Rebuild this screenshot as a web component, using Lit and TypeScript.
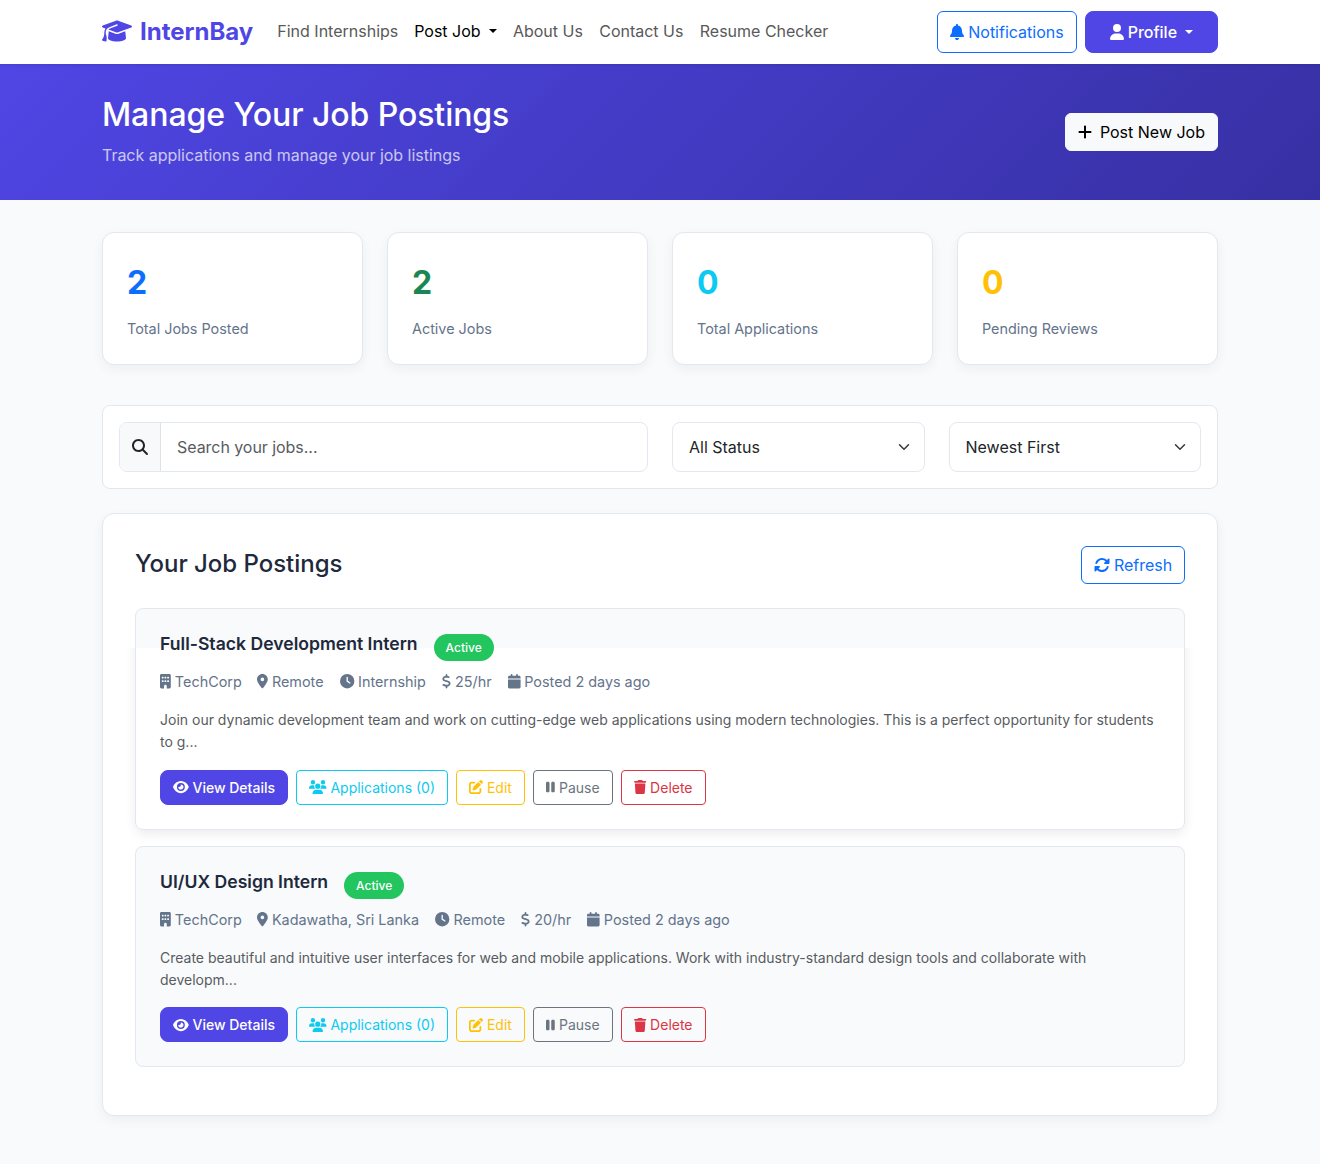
import { LitElement, html, css, svg } from "lit";
import { customElement, property } from "lit/decorators.js";
import { classMap } from "lit/directives/class-map.js";

const ICONS: Record<string, [number, string]> = {
  cap: [640, "M320 32c-8.1 0-16.1 1.4-23.7 4.1L15.8 137.4C6.3 140.9 0 149.9 0 160s6.3 19.1 15.8 22.6l57.9 20.9C57.3 229.3 48 259.8 48 291.9v28.1c0 28.4-10.8 57.7-22.3 80.8c-6.5 13-13.9 25.8-22.5 37.6C0 442.7-.9 448.3 .9 453.4s6 8.9 11.2 10.2l64 16c4.2 1.1 8.7 .3 12.4-2s6.3-6.1 7.1-10.4c8.6-42.8 4.3-81.2-2.1-108.7C90.3 344.3 86 329.8 80 316.5V291.9c0-30.2 10.2-58.7 27.9-81.5c12.9-15.5 29.6-28 49.2-35.7l157-61.7c8.2-3.2 17.5 .8 20.7 9s-.8 17.5-9 20.7l-157 61.7c-12.4 4.9-23.3 12.4-32.2 21.6l159.6 57.6c7.6 2.7 15.6 4.1 23.7 4.1s16.1-1.4 23.7-4.1L624.2 182.6c9.5-3.4 15.8-12.5 15.8-22.6s-6.3-19.1-15.8-22.6L343.7 36.1C336.1 33.4 328.1 32 320 32zM128 408c0 35.3 86 72 192 72s192-36.7 192-72L496.7 262.6 354.5 314c-11.1 4-22.8 6-34.5 6s-23.5-2-34.5-6L143.3 262.6 128 408z"],
  bell: [448, "M224 0c-17.7 0-32 14.3-32 32V51.2C119 66 64 130.6 64 208v18.8c0 47-17.3 92.4-48.5 127.6l-7.4 8.3c-8.4 9.4-10.4 22.9-5.3 34.4S19.4 416 32 416H416c12.6 0 24-7.4 29.2-18.9s3.1-25-5.3-34.4l-7.4-8.3C401.3 319.2 384 273.9 384 226.8V208c0-77.4-55-142-128-156.8V32c0-17.7-14.3-32-32-32zm45.3 493.3c12-12 18.7-28.3 18.7-45.3H224 160c0 17 6.7 33.3 18.7 45.3s28.3 18.7 45.3 18.7s33.3-6.7 45.3-18.7z"],
  user: [448, "M224 256A128 128 0 1 0 224 0a128 128 0 1 0 0 256zm-45.7 48C79.8 304 0 383.8 0 482.3C0 498.7 13.3 512 29.7 512H418.3c16.4 0 29.7-13.3 29.7-29.7C448 383.8 368.2 304 269.7 304H178.3z"],
  plus: [448, "M256 80c0-17.7-14.3-32-32-32s-32 14.3-32 32V224H48c-17.7 0-32 14.3-32 32s14.3 32 32 32H192V432c0 17.7 14.3 32 32 32s32-14.3 32-32V288H400c17.7 0 32-14.3 32-32s-14.3-32-32-32H256V80z"],
  search: [512, "M416 208c0 45.9-14.9 88.3-40 122.7L502.6 457.4c12.5 12.5 12.5 32.8 0 45.3s-32.8 12.5-45.3 0L330.7 376c-34.4 25.2-76.8 40-122.7 40C93.1 416 0 322.9 0 208S93.1 0 208 0S416 93.1 416 208zM208 352a144 144 0 1 0 0-288 144 144 0 1 0 0 288z"],
  sync: [512, "M142.9 142.9c62.2-62.2 162.7-62.5 225.3-1L327 183c-6.9 6.9-8.9 17.2-5.2 26.2s12.5 14.8 22.2 14.8H463.5c0 0 0 0 0 0H472c13.3 0 24-10.7 24-24V72c0-9.7-5.8-18.5-14.8-22.2s-19.3-1.7-26.2 5.2L413.4 96.6c-87.6-86.5-228.7-86.2-315.8 1C73.2 122 55.6 150.7 44.8 181.4c-5.9 16.7 2.9 34.9 19.5 40.8s34.9-2.9 40.8-19.5c7.7-21.8 20.2-42.3 37.8-59.8zM16 312v7.6 .7V440c0 9.7 5.8 18.5 14.8 22.2s19.3 1.7 26.2-5.2l41.6-41.6c87.6 86.5 228.7 86.2 315.8-1c24.4-24.4 42.1-53.1 52.9-83.7c5.9-16.7-2.9-34.9-19.5-40.8s-34.9 2.9-40.8 19.5c-7.7 21.8-20.2 42.3-37.8 59.8c-62.2 62.2-162.7 62.5-225.3 1L185 329c6.9-6.9 8.9-17.2 5.2-26.2s-12.5-14.8-22.2-14.8H48.4h-.7H40c-13.3 0-24 10.7-24 24z"],
  building: [384, "M48 0C21.5 0 0 21.5 0 48V464c0 26.5 21.5 48 48 48h96V432c0-26.5 21.5-48 48-48s48 21.5 48 48v80h96c26.5 0 48-21.5 48-48V48c0-26.5-21.5-48-48-48H48zM64 240c0-8.8 7.2-16 16-16h32c8.8 0 16 7.2 16 16v32c0 8.8-7.2 16-16 16H80c-8.8 0-16-7.2-16-16V240zm112-16h32c8.8 0 16 7.2 16 16v32c0 8.8-7.2 16-16 16H176c-8.8 0-16-7.2-16-16V240c0-8.8 7.2-16 16-16zm80 16c0-8.8 7.2-16 16-16h32c8.8 0 16 7.2 16 16v32c0 8.8-7.2 16-16 16H272c-8.8 0-16-7.2-16-16V240zM80 96h32c8.8 0 16 7.2 16 16v32c0 8.8-7.2 16-16 16H80c-8.8 0-16-7.2-16-16V112c0-8.8 7.2-16 16-16zm80 16c0-8.8 7.2-16 16-16h32c8.8 0 16 7.2 16 16v32c0 8.8-7.2 16-16 16H176c-8.8 0-16-7.2-16-16V112zM272 96h32c8.8 0 16 7.2 16 16v32c0 8.8-7.2 16-16 16H272c-8.8 0-16-7.2-16-16V112c0-8.8 7.2-16 16-16z"],
  pin: [384, "M215.7 499.2C267 435 384 279.4 384 192C384 86 298 0 192 0S0 86 0 192c0 87.4 117 243 168.3 307.2c12.3 15.3 35.1 15.3 47.4 0zM192 128a64 64 0 1 1 0 128 64 64 0 1 1 0-128z"],
  clock: [512, "M256 0a256 256 0 1 1 0 512A256 256 0 1 1 256 0zM232 120V256c0 8 4 15.5 10.7 20l96 64c11 7.4 25.9 4.4 33.3-6.7s4.4-25.9-6.7-33.3L280 243.2V120c0-13.3-10.7-24-24-24s-24 10.7-24 24z"],
  dollar: [320, "M160 0c17.7 0 32 14.3 32 32V67.7c1.6 .2 3.1 .4 4.7 .7c.4 .1 .7 .1 1.1 .2l48 8.8c17.4 3.2 28.9 19.9 25.7 37.2s-19.9 28.9-37.2 25.7l-47.5-8.7c-31.3-4.6-58.9-1.5-78.3 6.2s-27.2 18.3-29 28.1c-2 10.7-.5 16.7 1.2 20.4c1.8 3.9 5.5 8.3 12.8 13.2c16.3 10.7 41.3 17.7 73.7 26.3l2.9 .8c28.6 7.6 63.6 16.8 89.6 33.8c14.2 9.3 27.6 21.9 35.9 39.5c8.5 17.9 10.3 37.9 6.4 59.2c-6.9 38-33.1 63.4-65.6 76.7c-13.7 5.6-28.6 9.2-44.4 11V480c0 17.7-14.3 32-32 32s-32-14.3-32-32V445.1c-.4-.1-.9-.1-1.3-.2l-.2 0 0 0c-24.4-3.8-64.5-14.3-91.5-26.3c-16.1-7.2-23.4-26.1-16.2-42.2s26.1-23.4 42.2-16.2c20.9 9.3 55.3 18.5 75.2 21.6c31.9 4.7 58.2 2 76-5.3c16.9-6.9 24.6-16.9 26.8-28.9c1.9-10.6 .4-16.7-1.3-20.4c-1.9-4-5.6-8.4-13-13.3c-16.4-10.7-41.5-17.7-74-26.3l-2.8-.7 0 0C119.4 279.3 84.4 270 58.4 253c-14.2-9.3-27.5-22-35.8-39.6c-8.4-17.9-10.1-37.9-6.1-59.2C23.7 116 52.3 91.2 84.8 78.3c13.3-5.3 27.9-8.9 43.2-11V32c0-17.7 14.3-32 32-32z"],
  calendar: [448, "M96 32V64H48C21.5 64 0 85.5 0 112v48H448V112c0-26.5-21.5-48-48-48H352V32c0-17.7-14.3-32-32-32s-32 14.3-32 32V64H160V32c0-17.7-14.3-32-32-32S96 14.3 96 32zM448 192H0V464c0 26.5 21.5 48 48 48H400c26.5 0 48-21.5 48-48V192z"],
  eye: [576, "M288 32c-80.8 0-145.5 36.8-192.6 80.6C48.6 156 17.3 208 2.5 243.7c-3.3 7.9-3.3 16.7 0 24.6C17.3 304 48.6 356 95.4 399.4C142.5 443.2 207.2 480 288 480s145.5-36.8 192.6-80.6c46.8-43.5 78.1-95.4 93-131.1c3.3-7.9 3.3-16.7 0-24.6c-14.9-35.7-46.2-87.7-93-131.1C433.5 68.8 368.8 32 288 32zM144 256a144 144 0 1 1 288 0 144 144 0 1 1 -288 0zm144-64c0 35.3-28.7 64-64 64c-7.1 0-13.9-1.2-20.3-3.3c-5.5-1.8-11.9 1.6-11.7 7.4c.3 6.9 1.3 13.8 3.2 20.7c13.7 51.2 66.4 81.6 117.6 67.9s81.6-66.4 67.9-117.6c-11.1-41.5-47.8-69.4-88.6-71.1c-5.8-.2-9.2 6.1-7.4 11.7c2.1 6.4 3.3 13.2 3.3 20.3z"],
  users: [640, "M144 0a80 80 0 1 1 0 160A80 80 0 1 1 144 0zM512 0a80 80 0 1 1 0 160A80 80 0 1 1 512 0zM0 298.7C0 239.8 47.8 192 106.7 192h42.7c15.9 0 31 3.5 44.6 9.7c-1.3 7.2-1.9 14.7-1.9 22.3c0 38.2 16.8 72.5 43.3 96c-.2 0-.4 0-.7 0H21.3C9.6 320 0 310.4 0 298.7zM405.3 320c-.2 0-.4 0-.7 0c26.6-23.5 43.3-57.8 43.3-96c0-7.6-.7-15-1.9-22.3c13.6-6.3 28.7-9.7 44.6-9.7h42.7C592.2 192 640 239.8 640 298.7c0 11.8-9.6 21.3-21.3 21.3H405.3zM224 224a96 96 0 1 1 192 0 96 96 0 1 1 -192 0zM128 485.3C128 411.7 187.7 352 261.3 352H378.7C452.3 352 512 411.7 512 485.3c0 14.7-11.9 26.7-26.7 26.7H154.7c-14.7 0-26.7-11.9-26.7-26.7z"],
  edit: [512, "M471.6 21.7c-21.9-21.9-57.3-21.9-79.2 0L362.3 51.7l97.9 97.9 30.1-30.1c21.9-21.9 21.9-57.3 0-79.2L471.6 21.7zm-299.2 220c-6.1 6.1-10.8 13.6-13.5 21.9l-29.6 88.8c-2.9 8.6-.6 18.1 5.8 24.6s15.9 8.7 24.6 5.8l88.8-29.6c8.2-2.7 15.7-7.4 21.9-13.5L437.7 172.3 339.7 74.3 172.4 241.7zM96 64C43 64 0 107 0 160V416c0 53 43 96 96 96H352c53 0 96-43 96-96V320c0-17.7-14.3-32-32-32s-32 14.3-32 32v96c0 17.7-14.3 32-32 32H96c-17.7 0-32-14.3-32-32V160c0-17.7 14.3-32 32-32h96c17.7 0 32-14.3 32-32s-14.3-32-32-32H96z"],
  pause: [320, "M48 64C21.5 64 0 85.5 0 112V400c0 26.5 21.5 48 48 48H80c26.5 0 48-21.5 48-48V112c0-26.5-21.5-48-48-48H48zm192 0c-26.5 0-48 21.5-48 48V400c0 26.5 21.5 48 48 48h32c26.5 0 48-21.5 48-48V112c0-26.5-21.5-48-48-48H240z"],
  trash: [448, "M135.2 17.7L128 32H32C14.3 32 0 46.3 0 64S14.3 96 32 96H416c17.7 0 32-14.3 32-32s-14.3-32-32-32H320l-7.2-14.3C307.4 6.8 296.3 0 284.2 0H163.8c-12.1 0-23.2 6.8-28.6 17.7zM416 128H32L53.2 467c1.6 25.3 22.6 45 47.9 45H346.9c25.3 0 46.3-19.7 47.9-45L416 128z"],
};

const icon = (name: string) => {
  const [w, d] = ICONS[name];
  return html`<svg class="icon" viewBox="0 0 ${w} 512" width="${w / 512}em" height="1em" aria-hidden="true">${svg`<path d=${d}></path>`}</svg>`;
};

const shared = css`
  *, *::before, *::after { box-sizing: border-box; }
  h1, h2, h3, p { margin: 0; font-weight: 500; line-height: 1.2; }
  .icon { display: inline-block; vertical-align: -0.125em; fill: currentColor; overflow: visible; }
  .btn {
    display: inline-block; font: inherit; line-height: 1.5; white-space: nowrap;
    padding: 6px 12px; border: 1px solid currentColor; border-radius: 6px; background: transparent;
  }
`;

interface Job {
  title: string; company: string; place: string; type: string; pay: string; text: string;
}

const JOBS: Job[] = [
  {
    title: "Full-Stack Development Intern", company: "TechCorp", place: "Remote", type: "Internship", pay: "25/hr",
    text: "Join our dynamic development team and work on cutting-edge web applications using modern technologies. This is a perfect opportunity for students to g...",
  },
  {
    title: "UI/UX Design Intern", company: "TechCorp", place: "Kadawatha, Sri Lanka", type: "Remote", pay: "20/hr",
    text: "Create beautiful and intuitive user interfaces for web and mobile applications. Work with industry-standard design tools and collaborate with developm...",
  },
];

@customElement("job-card")
export class JobCard extends LitElement {
  @property({ attribute: false }) job!: Job;
  @property({ type: Boolean }) raised = false;

  static styles = [shared, css`
    :host { display: block; }
    .card {
      position: relative; z-index: 0; height: 221.7px; padding: 24px;
      border: 1px solid #e2e8f0; border-radius: 8px; background: #f8fafc;
    }
    .raised { background: linear-gradient(#f8fafc 39px, #fff 39px); }
    .raised::before {
      content: ""; position: absolute; z-index: -1; inset: -1px; border-radius: 8px;
      box-shadow: 0 4px 12px rgba(0, 0, 0, 0.08); clip-path: inset(40px -24px -24px -24px);
    }
    .head { display: flex; gap: 16px; height: 36px; }
    h3 { font-size: 17.6px; font-weight: 600; color: #1e293b; line-height: 21px; }
    .badge {
      height: 27px; margin-top: 1px; padding: 0 12px; border-radius: 20px; line-height: 27px;
      background: #22c55e; color: #fff; font-size: 12px; font-weight: 500;
    }
    .meta { display: flex; gap: 16px; font-size: 14.4px; line-height: 23px; color: #64748b; margin-top: 1px; }
    .meta span:first-child { margin-right: -0.7px; }
    .text { margin-top: 16px; font-size: 14px; line-height: 22.4px; font-weight: 400; color: #585c5f; }
    .actions { display: flex; gap: 8px; margin-top: 15.7px; font-size: 14px; }
    .btn { border-radius: 4px; }
    .view { background: #4f46e5; border-color: #4f46e5; color: #fff; border-radius: 8px; font-weight: 500; }
    .apps { color: #0dcaf0; }
    .edit { color: #ffc107; }
    .pause { color: #6c757d; width: 80px; }
    .delete { color: #dc3545; }
  `];

  render() {
    const j = this.job;
    return html`
      <article class=${classMap({ card: true, raised: this.raised })}>
        <div class="head"><h3>${j.title}</h3><span class="badge">Active</span></div>
        <div class="meta">
          <span>${icon("building")} ${j.company}</span>
          <span>${icon("pin")} ${j.place}</span>
          <span>${icon("clock")} ${j.type}</span>
          <span>${icon("dollar")} ${j.pay}</span>
          <span>${icon("calendar")} Posted 2 days ago</span>
        </div>
        <p class="text">${j.text}</p>
        <div class="actions">
          <button class="btn view">${icon("eye")} View Details</button>
          <button class="btn apps">${icon("users")} Applications (0)</button>
          <button class="btn edit">${icon("edit")} Edit</button>
          <button class="btn pause">${icon("pause")} Pause</button>
          <button class="btn delete">${icon("trash")} Delete</button>
        </div>
      </article>`;
  }
}

@customElement("app-root")
export class AppRoot extends LitElement {
  static styles = [shared, css`
    :host {
      display: block; min-height: 1164px; background: #f8fafc; color: #212529;
      font-family: Inter, sans-serif; font-size: 16px; line-height: 1.6;
    }
    .wrap { width: 1116px; margin: 0 auto; }
    .nav { position: relative; height: 64px; background: #fff; box-shadow: 0 1px 3px rgba(0, 0, 0, 0.1); }
    .bar { display: flex; align-items: center; height: 64px; }
    .brand { display: flex; align-items: center; gap: 8px; margin-right: 24px; font-size: 24px; font-weight: 700; color: #4f46e5; }
    .brand .icon { margin-bottom: 1.6px; }
    .links { display: flex; gap: 16.3px; line-height: 24px; color: #595959; padding-bottom: 2px; }
    .current { color: #000; margin-left: -0.4px; }
    .caret::after {
      content: ""; display: inline-block; margin-left: 8px; vertical-align: 4px;
      border: 4.8px solid transparent; border-top-color: currentColor; border-bottom: 0;
    }
    .account { display: flex; gap: 8px; margin-left: auto; }
    .account .btn { height: 42px; }
    .account .icon, .list-head .icon, .light .icon { margin-right: -0.6px; }
    .outline { color: #0d6efd; }
    .notify { width: 140px; }
    .profile { width: 133px; padding: 6px 0 6px; background: #4f46e5; border-color: #4f46e5; border-radius: 8px; color: #fff; font-weight: 500; }
    .refresh { width: 104px; }
    .hero { height: 136px; background: linear-gradient(135deg, #4f46e5, #3730a3); color: #fff; }
    .hero .wrap { display: flex; align-items: center; justify-content: space-between; height: 136px; }
    h1 { font-size: 32px; letter-spacing: -0.08px; padding-top: 0.5px; margin-bottom: 8.5px; }
    .lead { font-weight: 400; line-height: 25.6px; letter-spacing: -0.02px; opacity: 0.7; }
    .light { width: 153px; background: #f8f9fa; border-color: #f8f9fa; color: #000; }
    .light .icon { margin-right: 3.4px; }
    .stats { display: grid; grid-template-columns: repeat(4, 1fr); gap: 24px; padding: 32px 0 40px; }
    .stat, .list { background: #fff; border: 1px solid #e2e8f0; border-radius: 12px; box-shadow: 0 4px 12px rgba(0, 0, 0, 0.05); }
    .stat { height: 133px; padding: 24px; }
    .num { font-size: 32px; font-weight: 700; margin-bottom: 8.8px; }
    .label { font-size: 14.4px; color: #64748b; }
    .blue { color: #0d6efd; }
    .green { color: #198754; }
    .cyan { color: #0dcaf0; }
    .amber { color: #ffc107; }
    .filter {
      display: grid; grid-template-columns: 529px 252.5px 252.5px; gap: 24px; padding: 16px;
      background: #fff; border: 1px solid #e2e8f0; border-radius: 8px;
    }
    .field { display: flex; align-items: center; height: 50px; border: 1px solid #e2e8f0; border-radius: 8px; line-height: 24px; }
    .addon { display: flex; align-items: center; height: 48px; padding: 0 12px; background: #f8f9fa; border-right: 1px solid #dee2e6; border-radius: 6px 0 0 6px; }
    .hint { padding-left: 16px; color: #585c5f; letter-spacing: -0.05px; }
    .select { justify-content: space-between; padding: 0 12px 0 16px; }
    .list { margin-top: 24px; padding: 32px; height: 603px; }
    .list-head { display: flex; justify-content: space-between; margin-bottom: 24px; }
    h2 { font-size: 24px; letter-spacing: -0.03px; color: #1e293b; padding-top: 4px; }
    .jobs { display: grid; gap: 16px; }
  `];

  render() {
    const stats = [
      ["2", "Total Jobs Posted", "blue"],
      ["2", "Active Jobs", "green"],
      ["0", "Total Applications", "cyan"],
      ["0", "Pending Reviews", "amber"],
    ];
    const chevron = html`<svg width="16" height="12" viewBox="0 0 16 16" fill="none" stroke="#343a40" stroke-width="2" stroke-linecap="round" stroke-linejoin="round"><path d="m2 5 6 6 6-6"></path></svg>`;
    return html`
      <nav class="nav"><div class="wrap bar">
        <div class="brand">${icon("cap")}<span>InternBay</span></div>
        <div class="links">
          <span>Find Internships</span><span class="current caret">Post Job</span><span>About Us</span><span>Contact Us</span><span>Resume Checker</span>
        </div>
        <div class="account">
          <button class="btn outline notify">${icon("bell")} Notifications</button>
          <button class="btn profile caret">${icon("user")} Profile</button>
        </div>
      </div></nav>
      <header class="hero"><div class="wrap">
        <div><h1>Manage Your Job Postings</h1><p class="lead">Track applications and manage your job listings</p></div>
        <button class="btn light">${icon("plus")} Post New Job</button>
      </div></header>
      <main class="wrap">
        <section class="stats">
          ${stats.map(([n, l, c]) => html`<div class="stat"><div class="num ${c}">${n}</div><div class="label">${l}</div></div>`)}
        </section>
        <section class="filter">
          <div class="field"><span class="addon">${icon("search")}</span><span class="hint">Search your jobs...</span></div>
          <div class="field select"><span>All Status</span>${chevron}</div>
          <div class="field select"><span>Newest First</span>${chevron}</div>
        </section>
        <section class="list">
          <div class="list-head"><h2>Your Job Postings</h2><button class="btn outline refresh">${icon("sync")} Refresh</button></div>
          <div class="jobs">
            ${JOBS.map((j, i) => html`<job-card .job=${j} ?raised=${i === 0}></job-card>`)}
          </div>
        </section>
      </main>`;
  }
}
